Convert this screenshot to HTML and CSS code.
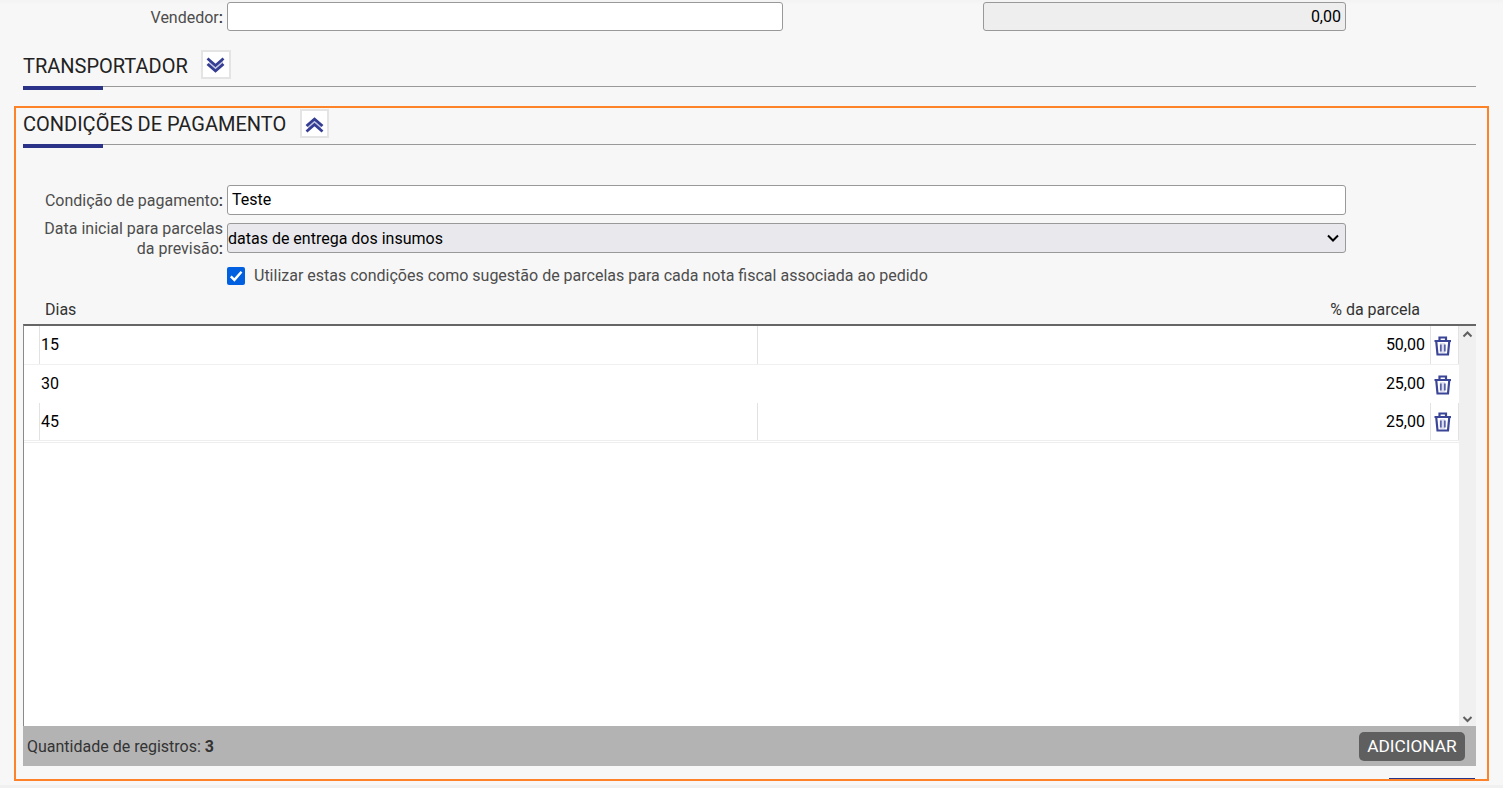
FILE: index.html
```html
<!DOCTYPE html>
<html lang="pt-BR">
<head>
  <meta charset="UTF-8">
  <meta name="viewport" content="width=device-width, initial-scale=1.0">
  <title>Pedido de compra</title>
  <link rel="stylesheet" href="styles.css">
</head>
<body>

  <!-- Vendedor e valor -->
  <div class="linha linha-topo">
    <label class="rotulo" for="vendedor">Vendedor<b>:</b></label>
    <input class="campo campo-vendedor" type="text" id="vendedor">
    <input class="campo campo-valor" type="text" value="0,00" readonly>
  </div>

  <!-- Transportador -->
  <div class="secao">
    <div class="titulo">
      <h2 class="titulo-transportador">TRANSPORTADOR</h2>
      <button class="alternar">
        <svg width="20" height="18" viewBox="0 0 20 18"><path class="seta-clara" d="M3 4l7 7 7-7v4l-7 7-7-7z"/><path d="M1.5 2.5l8 7 8-7M1.5 8l8 7 8-7"/></svg>
      </button>
    </div>
  </div>

  <!-- Condições de pagamento -->
  <div class="destaque">
    <div class="titulo">
      <h2 class="titulo-condicoes">CONDIÇÕES DE PAGAMENTO</h2>
      <button class="alternar">
        <svg width="20" height="18" viewBox="0 0 20 18"><path class="seta-clara" d="M3 15l6.5-7 6.5 7v-4l-6.5-7L3 11z"/><path d="M1.5 11l8-7 8 7M1.5 16.5l8-7 8 7"/></svg>
      </button>
    </div>

    <div class="formulario">
      <div class="linha">
        <label class="rotulo" for="condicao">Condição de pagamento<b>:</b></label>
        <input class="campo campo-largo" type="text" id="condicao" value="Teste">
      </div>
      <div class="linha linha-data">
        <label class="rotulo" for="data-inicial">Data inicial para parcelas<br>da previsão<b>:</b></label>
        <div class="selecao">
          <select class="campo campo-largo" id="data-inicial">
            <option>datas de entrega dos insumos</option>
          </select>
          <svg class="selecao-seta" width="14" height="10" viewBox="0 0 14 10"><path d="M2 1.5l5 5 5-5"/></svg>
        </div>
      </div>
      <label class="opcao">
        <input type="checkbox" checked>
        <svg class="marca" width="18" height="18" viewBox="0 0 18 18"><path d="M3.8 9.3l3.6 3.6L14.5 4.8"/></svg>
        <span>Utilizar estas condições como sugestão de parcelas para cada nota fiscal associada ao pedido</span>
      </label>
    </div>

    <div class="cabecalho">
      <span>Dias</span>
      <span>% da parcela</span>
    </div>

    <div class="grade">
      <div class="registros">
        <div class="registro">
          <span class="marcador"></span><span class="dias">15</span><span class="parcela">50,00</span>
          <span class="excluir"><svg width="18" height="20" viewBox="0 0 18 20"><path class="fundo" d="M6 7h5v10H6z"/><path d="M0.5 5h16.5M5.5 4.5V1.5h6.5v3M2.3 6l1.2 12.5h10.5L15.2 6"/><path class="fino" d="M6.8 8.5v7M10.8 8.5v7"/></svg></span>
        </div>
        <div class="registro selecionado">
          <span class="marcador"></span><span class="dias">30</span><span class="parcela">25,00</span>
          <span class="excluir"><svg width="18" height="20" viewBox="0 0 18 20"><path class="fundo" d="M6 7h5v10H6z"/><path d="M0.5 5h16.5M5.5 4.5V1.5h6.5v3M2.3 6l1.2 12.5h10.5L15.2 6"/><path class="fino" d="M6.8 8.5v7M10.8 8.5v7"/></svg></span>
        </div>
        <div class="registro ultimo">
          <span class="marcador"></span><span class="dias">45</span><span class="parcela">25,00</span>
          <span class="excluir"><svg width="18" height="20" viewBox="0 0 18 20"><path class="fundo" d="M6 7h5v10H6z"/><path d="M0.5 5h16.5M5.5 4.5V1.5h6.5v3M2.3 6l1.2 12.5h10.5L15.2 6"/><path class="fino" d="M6.8 8.5v7M10.8 8.5v7"/></svg></span>
        </div>
      </div>
      <div class="rolagem">
        <svg width="11" height="8" viewBox="0 0 11 8"><path d="M1.5 6.5l4-4 4 4"/></svg>
        <svg width="11" height="8" viewBox="0 0 11 8"><path d="M1.5 2l4 4 4-4"/></svg>
      </div>
    </div>

    <div class="rodape">
      <span class="total">Quantidade de registros: <b>3</b></span>
      <button class="adicionar">ADICIONAR</button>
    </div>
    <div class="proximo"></div>
  </div>

</body>
</html>
```

FILE: styles.css
```css
* {
  box-sizing: border-box;
}

body {
  margin: 0;
  height: 788px;
  overflow: hidden;
  padding: 2px 14px 0;
  background: linear-gradient(#f3f3f3, #f7f7f7 5px, #f7f7f7 785px, #f0f0f0 785px);
  color: #4d4d4d;
  font-family: Roboto, "Liberation Sans", sans-serif;
  font-size: 16px;
  line-height: 20px;
}

.linha {
  display: flex;
  align-items: center;
}

.linha-topo {
  height: 29px;
}

.rotulo {
  width: 209px;
  margin-right: 4px;
  padding-top: 2px;
  text-align: right;
  white-space: nowrap;
}

.rotulo b {
  color: #333;
  font-weight: 500;
}

.campo {
  height: 30px;
  margin: 0;
  padding: 0 4px 1px;
  border: 1px solid #999;
  border-radius: 3px;
  background: #fff;
  color: #000;
  font-family: inherit;
  font-size: 16px;
}

.campo-vendedor {
  width: 556px;
  height: 29px;
}

.campo-valor {
  width: 363px;
  height: 29px;
  margin-left: 200px;
  padding-bottom: 0;
  background: #eee;
  text-align: right;
}

.campo-largo {
  width: 1119px;
}

/* Títulos das seções */
.secao {
  height: 75px;
  padding: 19px 13px 0 9px;
}

.titulo {
  display: flex;
  align-items: flex-start;
  height: 37px;
  border-bottom: 1px solid #999;
}

.titulo::after {
  content: "";
  order: -1;
  width: 80px;
  height: 4px;
  margin: 36px -80px 0 0;
  background: #2b3389;
}

.titulo h2 {
  margin: 4px 13px 0 0;
  color: #222;
  font-size: 20px;
  font-weight: 400;
  line-height: 24px;
  white-space: nowrap;
}

.titulo-transportador {
  width: 165px;
}

.titulo-condicoes {
  width: 264px;
}

.alternar {
  display: flex;
  align-items: center;
  justify-content: center;
  width: 30px;
  height: 29px;
  padding: 0;
  border: 2px solid #e4e4e4;
  background: #fff;
}

.destaque .alternar {
  width: 29px;
  margin-top: 1px;
}

.alternar path {
  fill: none;
  stroke: #343d93;
  stroke-width: 2.8;
}

.alternar .seta-clara {
  fill: #c3c6e3;
  stroke: none;
}

.destaque {
  height: 675px;
  padding: 0 11px 0 7px;
  border: 2px solid #fd8228;
}

/* Formulário */
.formulario {
  padding-top: 40px;
}

.formulario .rotulo {
  width: 200px;
}

.linha-data {
  height: 46px;
}

.selecao {
  position: relative;
  height: 30px;
}

.selecao .campo {
  appearance: none;
  padding: 0;
  background: #e9e9ed;
}

.selecao-seta {
  position: absolute;
  right: 6px;
  top: 11px;
}

.selecao-seta path {
  fill: none;
  stroke: #000;
  stroke-width: 2;
}

.opcao {
  display: flex;
  align-items: center;
  height: 20px;
  margin: 5px 0 0 204px;
}

.opcao input {
  appearance: none;
  width: 18px;
  height: 18px;
  margin: 0 -18px 0 0;
  border-radius: 2px;
  background: #0060df;
}

.marca {
  margin-right: 9px;
  z-index: 1;
}

.marca path {
  fill: none;
  stroke: #fff;
  stroke-width: 2.4;
}

/* Parcelas */
.cabecalho {
  display: flex;
  justify-content: space-between;
  height: 38px;
  padding: 14px 56px 0 22px;
  color: #333;
}

.grade {
  display: flex;
  height: 402px;
  border-top: 2px solid #666;
  border-left: 1px solid #8a8a8a;
  background: #fff;
}

.registros {
  flex: 1;
}

.registro {
  display: flex;
  height: 39px;
  border-bottom: 1px solid #f0f0f0;
  color: #000;
  line-height: 38px;
}

.registro span {
  border-right: 1px solid #e2e2e2;
}

.marcador {
  width: 16px;
}

.dias {
  width: 718px;
  padding-left: 1px;
}

.parcela {
  flex: 1;
  padding-right: 5px;
  text-align: right;
}

.excluir {
  display: flex;
  align-items: center;
  width: 28px;
  padding: 1px 0 0 3px;
}

.excluir path {
  fill: none;
  stroke: #3b4598;
  stroke-width: 2.2;
}

.excluir .fino {
  stroke: #5962a8;
  stroke-width: 1.8;
}

.excluir .fundo {
  fill: #dfe1f0;
  stroke: none;
}

.selecionado,
.selecionado span {
  border-color: transparent;
}

.selecionado {
  height: 38px;
  border-bottom: 0;
}

.ultimo {
  height: 40px;
  line-height: 37px;
  border-bottom: 3px double #eee;
}

.rolagem {
  display: flex;
  flex-direction: column;
  align-items: center;
  justify-content: space-between;
  width: 17px;
  padding: 4px 0 3px;
  background: #f0f0f0;
}

.rolagem path {
  fill: none;
  stroke: #606060;
  stroke-width: 2;
}

.rodape {
  display: flex;
  align-items: center;
  justify-content: space-between;
  height: 40px;
  padding: 0 11px 0 4px;
  background: #b3b3b3;
  color: #333;
}

.total {
  padding-top: 2px;
}

.adicionar {
  width: 106px;
  height: 29px;
  padding: 0;
  border: 0;
  border-radius: 5px;
  background: #5f5f5f;
  color: #fff;
  font-family: inherit;
  font-size: 17.3px;
}

.proximo {
  width: 86px;
  height: 1px;
  margin: 12px 1px 0 auto;
  background: #2b3389;
}
```
